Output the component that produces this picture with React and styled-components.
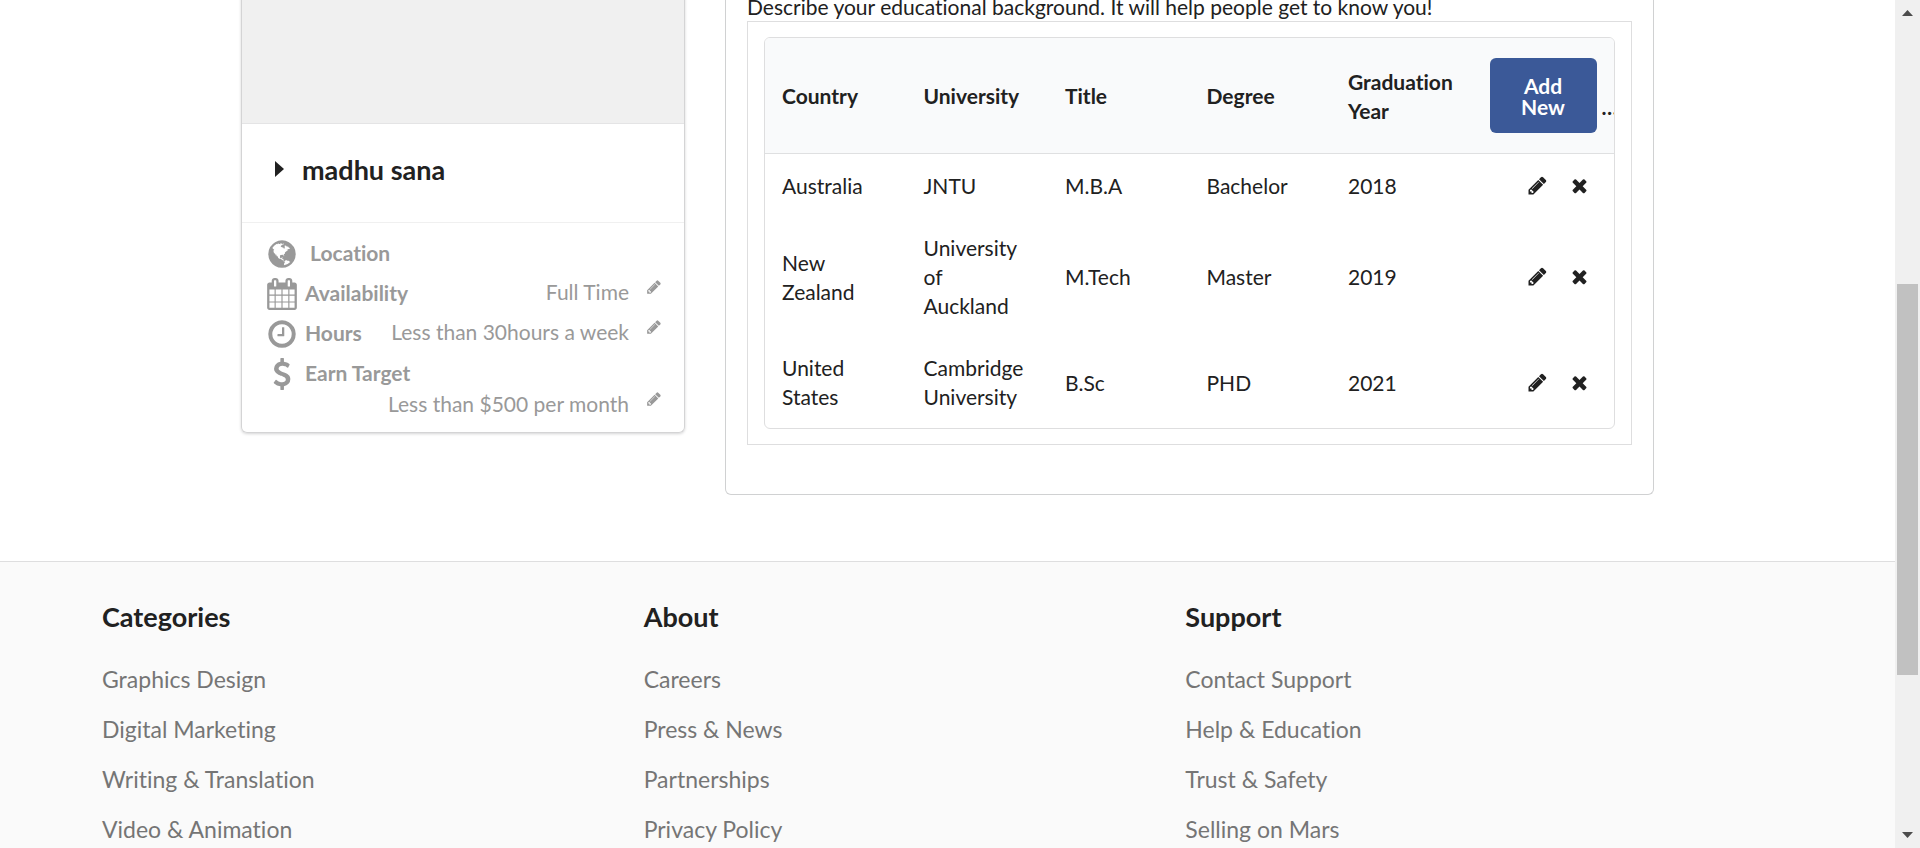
import React from "react";
import styled, { createGlobalStyle } from "styled-components";

const GlobalStyle = createGlobalStyle`
  *, *::before, *::after { box-sizing: border-box; }
  body {
    margin: 0;
    background: #fff;
    color: #212121;
    font-family: Lato, "Liberation Sans", sans-serif;
    font-size: 21px;
    line-height: 29px;
    font-variant-ligatures: none;
  }
`;

const Page = styled.div`
  display: flex;
  height: 100vh;
  overflow: hidden;
`;

const Content = styled.div`
  flex: 1;
  min-width: 0;
  margin-top: -8px;
`;

const Profile = styled.main`
  display: flex;
  align-items: flex-start;
  gap: 40px;
  width: 100%;
  max-width: 1413px;
  margin: 0 auto 66px;
`;

const Card = styled.aside`
  flex: 0 0 444px;
  border: 1px solid #d4d4d5;
  border-top: 0;
  border-radius: 0 0 6px 6px;
  box-shadow: 0 1px 3px #d4d4d5;
  overflow: hidden;
`;

const Photo = styled.div`
  height: 131px;
  background: #f0f0f0;
`;

const NameBar = styled.div`
  display: flex;
  align-items: center;
  gap: 18px;
  height: 99px;
  padding: 0 33px;
  border-top: 1px solid #e4e4e5;
`;

const Name = styled.h2`
  margin: 0;
  padding-bottom: 6px;
  font-size: 27px;
  font-weight: 700;
  line-height: 32px;
`;

const Caret = styled.svg`
  width: 9px;
  height: 16px;
  margin-bottom: 9px;
`;

const Details = styled.ul`
  display: grid;
  gap: 8px;
  margin: 0;
  padding: 15px 22px 10px 24px;
  border-top: 1px solid #f0f0f0;
  list-style: none;
  color: #999;
`;

const Detail = styled.li`
  display: flex;
  flex-wrap: wrap;
  align-items: center;
  gap: 1px 7px;
`;

const DetailLabel = styled.span`
  padding-bottom: 3px;
  font-weight: 700;
  line-height: 28px;
`;

const DetailValue = styled.span`
  display: flex;
  align-items: flex-start;
  justify-content: flex-end;
  gap: 17px;
  flex: ${(p) => (p.$below ? "0 0 100%" : "1")};
  padding-bottom: 6px;
  line-height: 25px;
  white-space: nowrap;
`;

const IconButton = styled.button`
  display: flex;
  padding: 0;
  border: 0;
  background: none;
  color: inherit;
  cursor: pointer;
`;

const Glyph = styled.svg`
  display: block;
  flex: none;
  width: ${(p) => p.$size}px;
  height: ${(p) => p.$size}px;
  fill: currentColor;
`;

const Panel = styled.section`
  flex: 1;
  min-width: 0;
  padding: 0 21px 49px;
  border: 1px solid #d0d1d2;
  border-top: 0;
  border-radius: 0 0 6px 6px;
`;

const Hint = styled.p`
  margin: 0;
`;

const Frame = styled.div`
  padding: 15px 16px;
  border: 1px solid #dededf;
`;

const TableBox = styled.div`
  padding-bottom: 1px;
  border: 1px solid #dededf;
  border-radius: 6px;
  overflow: hidden;
`;

const Table = styled.table`
  width: 100%;
  table-layout: fixed;
  border-collapse: separate;
  border-spacing: 0;
`;

const Th = styled.th`
  height: 116px;
  padding: 0 17px;
  border-bottom: 1px solid #dfe0e1;
  background: #f9fafb;
  font-weight: 700;
  text-align: left;
`;

const Td = styled.td`
  padding: 17px 17px 16px;
`;

const AddCell = styled.div`
  display: flex;
  align-items: last baseline;
  gap: 5px;
`;

const AddButton = styled.button`
  flex: 0 0 107px;
  padding: 17px 24px 16px;
  border: 0;
  border-radius: 6px;
  background: #3b5998;
  color: #fff;
  font: 700 21px/21px Lato, "Liberation Sans", sans-serif;
  cursor: pointer;
`;

const Actions = styled.div`
  display: flex;
  justify-content: flex-end;
  gap: 21px;
  padding-right: 7px;
`;

const Footer = styled.footer`
  display: grid;
  grid-template-columns: repeat(3, 1fr);
  padding: 39px 168px 40px 102px;
  border-top: 1px solid #dededf;
  background: #fafafa;
`;

const FooterTitle = styled.h4`
  margin: 0 0 31px;
  font-size: 27px;
  font-weight: 700;
  line-height: 32px;
`;

const FooterList = styled.ul`
  display: grid;
  gap: 20px;
  margin: 0;
  padding: 0;
  list-style: none;
`;

const FooterLink = styled.a`
  display: block;
  color: #757575;
  font-size: 23px;
  line-height: 30px;
  text-decoration: none;
`;

const Scrollbar = styled.div`
  display: flex;
  flex-direction: column;
  flex: 0 0 25px;
  background: #f0f0f0;
`;

const ScrollArrow = styled.svg`
  width: 25px;
  height: 25px;
  fill: #4c4c4c;
`;

const Track = styled.div`
  flex: 1;
  display: grid;
  grid-template-rows: 259fr 391fr 148fr;
  padding: 0 2px;
`;

const Thumb = styled.div`
  grid-row: 2;
  background: #c1c1c1;
`;

const paths = {
  pencil:
    "M491 1536l91-91-235-235-91 91v107h128v128h107zm523-928q0-22-22-22-10 0-17 7l-542 542q-7 7-7 17 0 22 22 22 10 0 17-7l542-542q7-7 7-17zm-54-192l416 416-832 832h-416v-416zm683 96q0 53-37 90l-166 166-416-416 166-165q36-38 90-38 53 0 91 38l235 234q37 39 37 91z",
  times:
    "M1490 1322q0 40-28 68l-136 136q-28 28-68 28t-68-28l-294-294-294 294q-28 28-68 28t-68-28l-136-136q-28-28-28-68t28-68l294-294-294-294q-28-28-28-68t28-68l136-136q28-28 68-28t68 28l294 294 294-294q28-28 68-28t68 28l136 136q28 28 28 68t-28 68l-294 294 294 294q28 28 28 68z",
  calendar:
    "M192 1664h288v-288h-288v288zm352 0h320v-288h-320v288zm-352-352h288v-320h-288v320zm352 0h320v-320h-320v320zm-352-384h288v-288h-288v288zm736 736h320v-288h-320v288zm-384-736h320v-288h-320v288zm768 736h288v-288h-288v288zm-384-352h320v-320h-320v320zm-352-864v-288q0-13-9.500-22.500t-22.500-9.500h-64q-13 0-22.500 9.500t-9.500 22.500v288q0 13 9.500 22.500t22.500 9.500h64q13 0 22.500-9.500t9.500-22.500zm736 864h288v-320h-288v320zm-384-384h320v-288h-320v288zm384 0h288v-288h-288v288zm32-480v-288q0-13-9.500-22.500t-22.500-9.500h-64q-13 0-22.500 9.500t-9.500 22.500v288q0 13 9.500 22.500t22.500 9.500h64q13 0 22.500-9.500t9.500-22.500zm384-64v1280q0 52-38 90t-90 38h-1408q-52 0-90-38t-38-90v-1280q0-52 38-90t90-38h128v-96q0-66 47-113t113-47h64q66 0 113 47t47 113v96h384v-96q0-66 47-113t113-47h64q66 0 113 47t47 113v96h128q52 0 90 38t38 90z",
  clock:
    "M1024 544v448q0 14-9 23t-23 9h-320q-14 0-23-9t-9-23v-64q0-14 9-23t23-9h224v-352q0-14 9-23t23-9h64q14 0 23 9t9 23zm416 352q0-148-73-273t-198-198-273-73-273 73-198 198-73 273 73 273 198 198 273 73 273-73 198-198 73-273zm224 0q0 209-103 385.500t-279.500 279.500-385.500 103-385.500-103-279.500-279.500-103-385.500 103-385.500 279.500-279.500 385.500-103 385.500 103 279.500 279.500 103 385.500z",
  dollar:
    "M1362 1185q0 153-99.500 263.500t-258.500 136.500v175q0 14-9 23t-23 9h-135q-13 0-22.500-9.500t-9.500-22.500v-175q-66-9-127.500-31t-101.500-44.500-74-48-46.500-37.500-17.500-18q-17-21-2-41l103-135q7-10 23-12 15-2 24 9l2 2q113 99 243 125 37 8 74 8 81 0 142.500-43t61.500-122q0-28-15-53t-33.500-42-58.500-37.500-66-32-80-32.500q-39-16-61.500-25t-61.500-26.500-62.500-31-56.500-35.500-53.500-42.500-43.500-49-35.500-58-21-66.500-8.500-78q0-138 98-242t255-134v-180q0-13 9.500-22.500t22.500-9.500h135q14 0 23 9t9 23v176q57 6 110.500 23t87 33.500 63.500 37.500 39 29 15 14q17 18 5 38l-81 146q-8 15-23 16-14 3-27-7-3-3-14.500-12t-39-26.500-58.500-32-74.500-26-85.500-11.500q-95 0-155 43t-60 111q0 26 8.500 48t29.500 41.500 39.500 33 56 31 60.500 27 70 27.500q53 20 81 31.500t76 35 75.500 42.500 62 50 53 63.500 31.500 76.500 13 94z",
  globe:
    "M896 128q209 0 385.500 103t279.500 279.500 103 385.500-103 385.500-279.500 279.500-385.500 103-385.500-103-279.500-279.500-103-385.500 103-385.500 279.500-279.500 385.500-103zm274 521q-2 1-9.500 9.500t-13.500 9.500q2 0 4.500-5t5-11 3.500-7q6-7 22-15 14-6 52-12 34-8 51 11-2-2 9.500-13t14.500-12q3-2 15-4.500t15-7.500l2-22q-12 1-17.500-7t-6.500-21q0 2-6 8 0-7-4.500-8t-11.500 1-9 1q-10-3-15-7.500t-8-16.500-4-15q-2-5-9.500-11t-9.500-10q-1-2-2.500-5.500t-3-6.500-4-5.500-5.500-2.500-7 5-7.500 10-4.500 5q-3-2-6-1.500t-4.500 1-4.500 3-5 3.500q-3 2-8.500 3t-8.500 2q15-5-1-11-10-4-16-3 9-4 7.500-12t-8.500-14h5q-1-4-8.500-8.500t-17.500-8.500-13-6q-8-5-34-9.500t-33-.5q-5 6-4.500 10.500t4 14 3.500 12.500q1 6-5.500 13t-6.500 12q0 7 14 15.500t10 21.500q-3 8-16 16t-16 12q-5 8-1.500 18.500t10.500 16.500q2 2 1.500 4t-3.500 4.500-5.500 4-6.500 3.500l-3 2q-11 5-20.500-6t-13.500-26q-7-25-16-30-23-8-29 1-5-13-41-26-25-9-58-4 6-1 0-15-7-15-19-12 3-6 4-17.500t1-13.500q3-13 12-23 1-1 7-8.500t9.500-13.500.5-6q35 4 50-11 5-5 11.500-17t10.500-17q9-6 14-5.500t14.500 5.500 14.500 5q14 1 15.500-11t-7.500-20q12 1 3-17-4-7-8-9-12-4-27 5-8 4 2 8-1-1-9.500 10.500t-16.500 17.500-16-5q-1-1-5.500-13.500t-9.500-13.500q-8 0-16 15 3-8-11-15t-24-8q19-12-8-27-7-4-20.500-5t-19.500 4q-5 7-5.500 11.500t5 8 10.500 5.500 11.500 4 8.500 3q14 10 8 14-2 1-8.500 3.500t-11.500 4.500-6 4q-3 4 0 14t-2 14q-5-5-9-17.500t-7-16.500q7 9-25 6l-10-1q-4 0-16 2t-20.500 1-13.500-8q-4-8 0-20 1-4 4-2-4-3-11-9.500t-10-8.500q-46 15-94 41 6 1 12-1 5-2 13-6.500t10-5.500q34-14 42-7l5-5q14 16 20 25-7-4-30-1-20 6-22 12 7 12 5 18-4-3-11.500-10t-14.500-11-15-5q-16 0-22 1-146 80-235 222 7 7 12 8 4 1 5 9t2.500 11 11.500-3q9 8 3 19 1-1 44 27 19 17 21 21 3 11-10 18-1-2-9-9t-9-4q-3 5 .5 18.500t10.500 12.500q-7 0-9.500 16t-2.500 35.500-1 23.500l2 1q-3 12 5.500 34.500t21.500 19.500q-13 3 20 43 6 8 8 9 3 2 12 7.500t15 10 10 10.500q4 5 10 22.500t14 23.500q-2 6 9.500 20t10.500 23q-1 0-2.500 1t-2.500 1q3 7 15.500 14t15.500 13q1 3 2 10t3 11 8 2q2-20-24-62-15-25-17-29-3-5-5.500-15.500t-4.500-14.500q2 0 6 1.500t8.500 3.500 7.500 4 2 3q-3 7 2 17.500t12 18.500 17 19 12 13q6 6 14 19.500t0 13.500q9 0 20 10.500t17 19.500q5 8 8 26t5 24q2 7 8.500 13.500t12.500 9.500l16 8 13 7q5 2 18.500 10.500t21.500 11.500q10 4 16 4t14.500-2.500 13.500-3.500q15-2 29 15t21 21q36 19 55 11-2 1 .5 7.500t8 15.500 9 14.500 5.500 8.500q5 6 18 15t18 15q6-4 7-9-3 8 7 20t18 10q14-3 14-32-31 15-49-18 0-1-2.500-5.500t-4-8.500-2.500-8.500 0-7.500 5-3q9 0 10-3.500t-2-12.500-4-13q-1-8-11-20t-12-15q-5 9-16 8t-16-9q0 1-1.500 5.500t-1.500 6.500q-13 0-15-1 1-3 2.500-17.500t3.500-22.500q1-4 5.500-12t7.500-14.500 4-12.500-4.500-9.500-17.500-2.500q-19 1-26 20-1 3-3 10.500t-5 11.500-9 7q-7 3-24 2t-24-5q-13-8-22.500-29t-9.500-37q0-10 2.500-26.500t3-25-5.500-24.500q3-2 9-9.500t10-10.500q2-1 4.500-1.500t4.500 0 4-1.500 3-6q-1-1-4-3-3-3-4-3 7 3 28.500-1.500t27.500 1.500q15 11 22-2 0-1-2.500-9.500t-.5-13.500q5 27 29 9 3 3 15.500 5t17.500 5q3 2 7 5.500t5.500 4.500 5-.5 8.500-6.500q10 14 12 24 11 40 19 44 7 3 11 2t4.500-9.500 0-14-1.500-12.500l-1-8v-18l-1-8q-15-3-18.500-12t1.500-18.500 15-18.500q1-1 8-3.500t15.500-6.500 12.500-8q21-19 15-35 7 0 11-9-1 0-5-3t-7.500-5-4.500-2q9-5 2-16 5-3 7.500-11t7.500-10q9 12 21 2 7-8 1-16 5-7 20.500-10.500t18.500-9.500q7 2 8-2t1-12 3-12q4-5 15-9t13-5l17-11q3-4 0-4 18 2 31-11 10-11-6-20 3-6-3-9.500t-15-5.500q3-1 11.500-.5t10.500-1.500q15-10-7-16-17-5-43 12zm-163 877q206-36 351-189-3-3-12.500-4.500t-12.500-3.500q-18-7-24-8 1-7-2.500-13t-8-9-12.500-8-11-7q-2-2-7-6t-7-5.500-7.500-4.500-8.500-2-10 1l-3 1q-3 1-5.500 2.500t-5.500 3-4 3 0 2.500q-21-17-36-22-5-1-11-5.500t-10.500-7-10-1.500-11.500 7q-5 5-6 15t-2 13q-7-5 0-17.500t2-18.500q-3-6-10.500-4.500t-12 4.500-11.500 8.500-9 6.500-8.500 5.500-8.500 7.500q-3 4-6 12t-5 11q-2-4-11.500-6.500t-9.500-5.500q2 10 4 35t5 38q7 31-12 48-27 25-29 40-4 22 12 26 0 7-8 20.500t-7 21.500q0 6 2 16z",
};

function Icon({ name, size = 21 }) {
  return (
    <Glyph $size={size} viewBox="0 0 1792 1792" aria-hidden="true">
      <path d={paths[name]} />
    </Glyph>
  );
}

const details = [
  { icon: "globe", label: "\u00a0Location" },
  { icon: "calendar", label: "Availability", value: "Full Time" },
  { icon: "clock", label: "Hours", value: "Less than 30hours a week" },
  { icon: "dollar", label: "Earn Target", value: "Less than $500 per month", below: true },
];

const columns = ["Country", "University", "Title", "Degree", "Graduation Year"];

const education = [
  ["Australia", "JNTU", "M.B.A", "Bachelor", "2018"],
  ["New Zealand", "University of Auckland", "M.Tech", "Master", "2019"],
  ["United States", "Cambridge University", "B.Sc", "PHD", "2021"],
];

const footer = [
  {
    title: "Categories",
    links: ["Graphics Design", "Digital Marketing", "Writing & Translation", "Video & Animation"],
  },
  { title: "About", links: ["Careers", "Press & News", "Partnerships", "Privacy Policy"] },
  {
    title: "Support",
    links: ["Contact Support", "Help & Education", "Trust & Safety", "Selling on Mars"],
  },
];

export default function App() {
  return (
    <>
      <GlobalStyle />
      <Page>
        <Content>
          <Profile>
            <Card>
              <Photo />
              <NameBar>
                <Caret viewBox="0 0 9 16" aria-hidden="true">
                  <path d="M0 0L9 8L0 16Z" fill="#212121" />
                </Caret>
                <Name>madhu sana</Name>
              </NameBar>
              <Details>
                {details.map((d) => (
                  <Detail key={d.icon}>
                    <Icon name={d.icon} size={32} />
                    <DetailLabel>{d.label}</DetailLabel>
                    {d.value && (
                      <DetailValue $below={d.below}>
                        {d.value}
                        <IconButton type="button" aria-label={`Edit ${d.label}`}>
                          <Icon name="pencil" size={16} />
                        </IconButton>
                      </DetailValue>
                    )}
                  </Detail>
                ))}
              </Details>
            </Card>
            <Panel>
              <Hint>
                Describe your educational background. It will help people get to know you!
              </Hint>
              <Frame>
                <TableBox>
                  <Table>
                    <thead>
                      <tr>
                        {columns.map((c) => (
                          <Th key={c} scope="col">
                            {c}
                          </Th>
                        ))}
                        <Th scope="col">
                          <AddCell>
                            <AddButton type="button">Add New</AddButton>
                            <span>…</span>
                          </AddCell>
                        </Th>
                      </tr>
                    </thead>
                    <tbody>
                      {education.map((row) => (
                        <tr key={row[0]}>
                          {row.map((cell) => (
                            <Td key={cell}>{cell}</Td>
                          ))}
                          <Td>
                            <Actions>
                              <IconButton type="button" aria-label={`Edit ${row[1]}`}>
                                <Icon name="pencil" />
                              </IconButton>
                              <IconButton type="button" aria-label={`Delete ${row[1]}`}>
                                <Icon name="times" />
                              </IconButton>
                            </Actions>
                          </Td>
                        </tr>
                      ))}
                    </tbody>
                  </Table>
                </TableBox>
              </Frame>
            </Panel>
          </Profile>
          <Footer>
            {footer.map((col) => (
              <div key={col.title}>
                <FooterTitle>{col.title}</FooterTitle>
                <FooterList>
                  {col.links.map((l) => (
                    <li key={l}>
                      <FooterLink href="#">{l}</FooterLink>
                    </li>
                  ))}
                </FooterList>
              </div>
            ))}
          </Footer>
        </Content>
        <Scrollbar aria-hidden="true">
          <ScrollArrow viewBox="0 0 25 25">
            <path d="M7 16L12.500 10L18 16Z" />
          </ScrollArrow>
          <Track>
            <Thumb />
          </Track>
          <ScrollArrow viewBox="0 0 25 25">
            <path d="M7 9L12.500 15L18 9Z" />
          </ScrollArrow>
        </Scrollbar>
      </Page>
    </>
  );
}
